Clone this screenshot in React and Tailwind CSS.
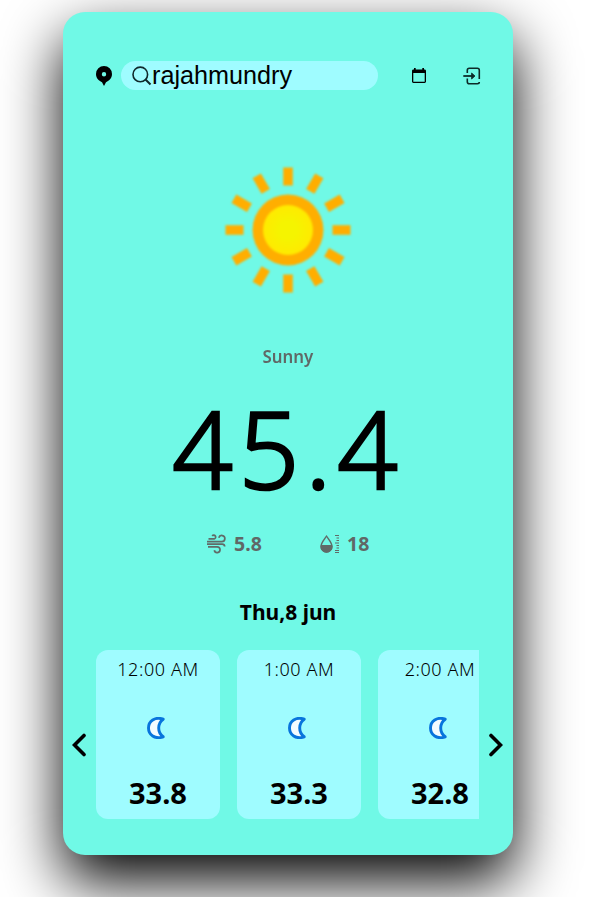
import React from "react";

const rounded = "font-['Noto_Sans','Open_Sans',sans-serif]";

const hours = [
  { time: "12:00 AM", temp: "33.8" },
  { time: "1:00 AM", temp: "33.3" },
  { time: "2:00 AM", temp: "32.8" },
];

const rays = [0, 30, 60, 90, 120, 150, 180, 210, 240, 270, 300, 330];

function Pin() {
  return (
    <svg className="w-4 h-5" viewBox="0 0 16 20">
      <path fillRule="evenodd" d="M8 0a8 8 0 0 1 8 8c0 4-2.6 6.600-6 8.200L8 20l-2-3.800C2.600 14.600 0 12 0 8a8 8 0 0 1 8-8Zm0 6a2.200 2.200 0 1 0 0 4.400A2.200 2.200 0 0 0 8 6Z" />
    </svg>
  );
}

function Search() {
  return (
    <svg className="w-5 h-5" viewBox="0 0 20 20" fill="none" stroke="#10282b" strokeWidth="1.6">
      <circle cx="8.300" cy="8.400" r="7.300" />
      <path d="m13.500 13.500 5 5" strokeWidth="2" />
    </svg>
  );
}

function Calendar() {
  return (
    <svg className="w-4 h-4" viewBox="0 0 16 16">
      <path fillRule="evenodd" d="M3 0h1.700v1.500h6.600V0H13v1.500h.6c.8 0 1.400.6 1.400 1.400v10.700c0 .8-.6 1.400-1.400 1.400H2.400C1.600 15 1 14.400 1 13.600V2.900c0-.8.6-1.400 1.400-1.400H3V0Zm-.7 5v8.700h11.400V5H2.300Z" />
    </svg>
  );
}

function Login() {
  return (
    <svg className="w-[18px] h-[18px]" viewBox="0 0 18 18" fill="none" stroke="#0d2b28" strokeWidth="1.600">
      <path d="M4.300 6V3.200c0-1.200.8-2 2-2h8c1.200 0 2 .8 2 2V12M4.300 11.500v3.200c0 1.200.8 2 2 2h8c1.200 0 2-.6 2-1.700" />
      <path d="M.3 9h10" strokeWidth="1.800" />
      <path d="m8.600 6 3.400 3-3.400 3Z" fill="#0d2b28" stroke="#0d2b28" strokeWidth=".8" />
    </svg>
  );
}

function Sun() {
  return (
    <svg className="w-32 h-32 blur-[1px]" viewBox="-64 -64 128 128">
      <defs>
        <radialGradient id="sun-core">
          <stop offset="0.35" stopColor="#f5f400" />
          <stop offset="1" stopColor="#ffea00" />
        </radialGradient>
      </defs>
      <circle r="35.500" fill="#ffae00" />
      <circle r="25" fill="url(#sun-core)" />
      {rays.map((a) => (
        <rect key={a} x="-4.800" y="-62.500" width="9.600" height="18" fill="#ffae00" transform={`rotate(${a})`} />
      ))}
    </svg>
  );
}

function Wind() {
  return (
    <svg className="w-5 h-5" viewBox="0 0 20 20" fill="none" stroke="#606b68" strokeWidth="1.700">
      <path d="M1.500 4.900h5.700a1.900 1.900 0 1 0-2-2.900M0 7.700h14.800a3.100 3.100 0 1 0-3-4M0 10.200h15.200a2.500 2.500 0 0 1 2.500 2.300M1 12.800h9.200a2.900 2.900 0 1 1-2.900 3.500" />
    </svg>
  );
}

function Humidity() {
  return (
    <svg className="w-5 h-5" viewBox="0 0 20 20" fill="none" stroke="#606b68">
      <path d="M6.500 2.200C4.500 5.400 1 8.500 1 12.700a5.500 5.500 0 0 0 11 0c0-4.200-3.500-7.300-5.500-10.500Z" strokeWidth="1.300" />
      <path d="M1 11.500h11v1.200a5.500 5.500 0 0 1-11 0Z" fill="#606b68" />
      <path d="M15 1.500h4M16.500 4h2.500M16.500 6.500h2.500M15 9h4M16.500 11.500h2.500M16.500 14h2.500M15 16.500h4M15 18.500h4" strokeWidth="1" />
    </svg>
  );
}

function Moon() {
  return (
    <svg className="w-[18px] h-[22px]" viewBox="0 0 18 22">
      <path d="M16.200 2.200C7.800-.7 1.500 4.300 1.500 11s6.300 11.700 14.700 8.800C10.200 15.500 10.200 6.500 16.200 2.200Z" fill="#f4fbff" stroke="#0874dc" strokeWidth="2.900" strokeLinejoin="round" />
    </svg>
  );
}

function Chevron({ flip }) {
  return (
    <svg className={flip ? "w-[14px] h-6 rotate-180" : "w-[14px] h-6"} viewBox="0 0 14 24" fill="none" stroke="#000" strokeWidth="3.600" strokeLinecap="round">
      <path d="M12 2.500 2.500 12 12 21.500" />
    </svg>
  );
}

export default function App() {
  return (
    <div className={`w-[589px] h-[897px] overflow-hidden bg-white pt-3 pl-[63px] text-black ${rounded}`}>
      <main className="flex h-[843px] w-[450px] flex-col items-center rounded-[22px] bg-[#70f9e6] shadow-[0_26px_60px_#000]">
        <header className="mt-[49px] flex h-[29px] w-full items-center pl-[33px]">
          <div className="pt-px"><Pin /></div>
          <div className="ml-[9px] flex h-[29px] w-[257px] items-center rounded-full bg-[#9ffcff] pl-[11px] font-['Liberation_Sans',Arial,sans-serif] text-[25.200px] leading-[29px]">
            <Search />
            <span>rajahmundry</span>
          </div>
          <div className="ml-[33px]"><Calendar /></div>
          <div className="ml-[36px]"><Login /></div>
        </header>
        <div className="mt-[76px]"><Sun /></div>
        <p className="mt-[50px] h-6 text-[18.500px] font-semibold leading-6 text-[#606866]"><span className="inline-block scale-x-[0.91]">Sunny</span></p>
        <h1 className="mt-[18px] h-[124px] whitespace-nowrap text-[106px] font-light leading-[124px] tracking-[6px] [-webkit-text-stroke:2.5px_#000] [stroke-linejoin:round]">45.4</h1>
        <div className="mt-[22px] flex h-6 w-full items-center pl-[144px] text-[19.500px] font-bold leading-6 text-[#606866]">
          <Wind />
          <span className="ml-[7px] w-[86px]">5.8</span>
          <Humidity />
          <span className="ml-[7px]">18</span>
        </div>
        <h2 className="mt-[42px] h-7 text-[21px] font-bold leading-7">Thu,8 jun</h2>
        <section className="mt-[24px] flex h-[169px] w-full items-center">
          <button className="mt-5 w-[33px] pl-[9px]"><Chevron /></button>
          <div className="flex w-[383px] gap-[17px] overflow-hidden">
            {hours.map((h) => (
              <article key={h.time} className="flex h-[169px] w-[124px] shrink-0 flex-col items-center rounded-xl bg-[#9ffcff]">
                <p className="mt-[7px] h-6 whitespace-nowrap text-[18px] font-light leading-6 tracking-[0.6px]">{h.time}</p>
                <div className="mt-[36px] pr-1"><Moon /></div>
                <p className="mt-[36px] h-9 text-[29px] font-bold leading-9">{h.temp}</p>
              </article>
            ))}
          </div>
          <button className="mt-5 pl-[10px]"><Chevron flip /></button>
        </section>
      </main>
    </div>
  );
}
